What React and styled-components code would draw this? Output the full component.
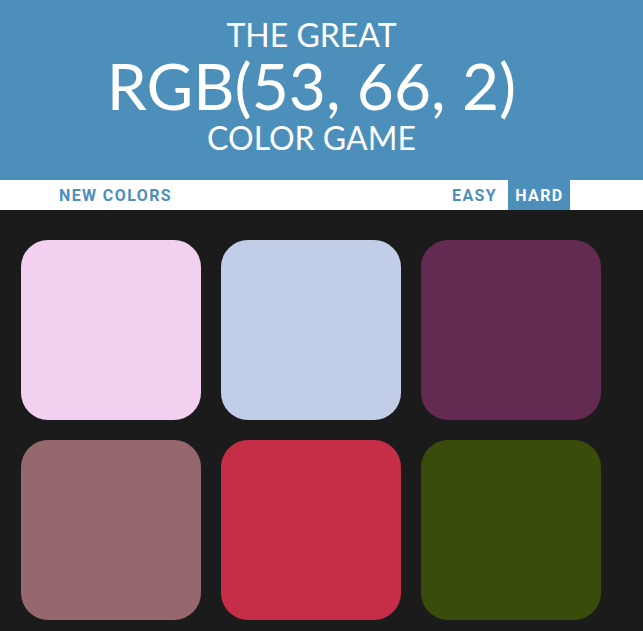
import styled, { createGlobalStyle } from 'styled-components';

const blue = '#4c8fbb';

const GlobalStyle = createGlobalStyle`
  body {
    margin: 0;
    background: #1b1b1b;
    font-family: Lato, "Open Sans", sans-serif;
  }
`;

const Header = styled.h1`
  margin: 0;
  padding: 17px 20px 0 0;
  height: 180px;
  box-sizing: border-box;
  background: ${blue};
  color: #ffffff;
  text-align: center;
  text-transform: uppercase;
  font-weight: 400;
  font-size: 32px;
  line-height: 1.1;
`;

const Line = styled.span`
  display: block;
`;

const ColorDisplay = styled.span`
  display: block;
  font-size: 64px;
  line-height: 68px;
  text-transform: none;
`;

const Stripe = styled.div`
  display: flex;
  align-items: stretch;
  gap: 5px;
  height: 30px;
  background: #ffffff;
  padding-left: 52px;
`;

const Button = styled.button`
  border: none;
  margin: 0;
  padding: 0 6px 0 7px;
  font-family: Roboto, "Liberation Sans", sans-serif;
  font-size: 16px;
  font-weight: 700;
  letter-spacing: 1.4px;
  text-transform: uppercase;
  color: ${p => (p.$selected ? '#ffffff' : blue)};
  background: ${p => (p.$selected ? blue : 'none')};
`;

const Message = styled.span`
  width: 257px;
`;

const Board = styled.div`
  display: grid;
  grid-template-columns: repeat(3, 180px);
  gap: 20px;
  padding: 30px 0 0 21px;
`;

const Square = styled.div`
  width: 180px;
  height: 180px;
  border-radius: 15%;
  background: ${p => p.color};
`;

const colors = [
  'rgb(242, 208, 239)',
  'rgb(194, 205, 232)',
  'rgb(99, 43, 81)',
  'rgb(150, 104, 109)',
  'rgb(198, 45, 71)',
  'rgb(58, 76, 9)',
];

const App = () => {
  return (
    <>
      <GlobalStyle />
      <Header>
        <Line>The Great</Line>
        <ColorDisplay>RGB(53, 66, 2)</ColorDisplay>
        <Line>Color Game</Line>
      </Header>
      <Stripe>
        <Button>New Colors</Button>
        <Message />
        <Button>Easy</Button>
        <Button $selected>Hard</Button>
      </Stripe>
      <Board>
        {colors.map(c => (
          <Square key={c} color={c} />
        ))}
      </Board>
    </>
  );
};

export default App;
